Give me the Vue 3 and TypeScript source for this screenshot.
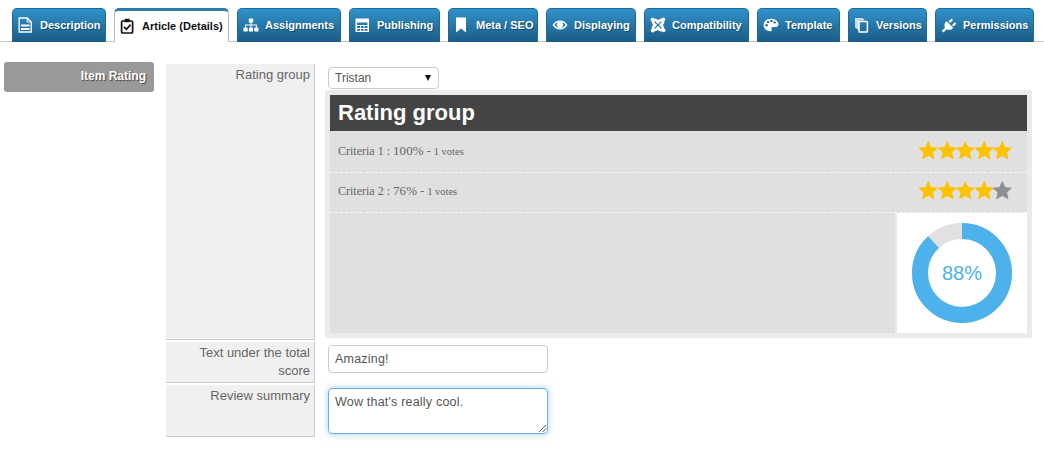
<script setup lang="ts">
interface Tab { label: string; icon: string; width: number; active?: boolean }
const tabs: Tab[] = [
  { label: 'Description', icon: 'doc', width: 94 },
  { label: 'Article (Details)', icon: 'clip', width: 115, active: true },
  { label: 'Assignments', icon: 'tree', width: 104 },
  { label: 'Publishing', icon: 'cal', width: 91 },
  { label: 'Meta / SEO', icon: 'mark', width: 90 },
  { label: 'Displaying', icon: 'eye', width: 90 },
  { label: 'Compatibility', icon: 'joomla', width: 105 },
  { label: 'Template', icon: 'palette', width: 83 },
  { label: 'Versions', icon: 'copies', width: 79 },
  { label: 'Permissions', icon: 'plug', width: 99 },
]
const starPts = '9,0.6 11.6,6.3 17.8,6.9 13.2,11 14.5,17.2 9,14 3.5,17.2 4.8,11 0.2,6.9 6.4,6.3'
const criteria = [
  { name: 'Criteria 1', pct: '100%', on: 5 },
  { name: 'Criteria 2', pct: '76%', on: 4 },
]
const r = 42
const circ = 2 * Math.PI * r
const dash = `${circ * 0.88} ${circ}`
const rotations = [0, 90, 180, 270]
</script>

<template>
  <div class="page">
    <nav class="tabs">
      <a v-for="t in tabs" :key="t.label" class="tab" :class="{ active: t.active }" :style="{ width: t.width + 'px' }">
        <svg class="ico" viewBox="0 0 16 16" width="16" height="16">
          <g v-if="t.icon === 'doc'">
            <path d="M1.2 1H9.2L13.2 5V15H1.2Z" fill="none" stroke="currentColor" stroke-width="1.4" />
            <path d="M9.2 1V5H13.2" fill="none" stroke="currentColor" stroke-width="1" />
            <rect x="3" y="7.5" width="8.5" height="2" fill="currentColor" />
            <rect x="3" y="11" width="8.5" height="2" fill="currentColor" />
          </g>
          <g v-else-if="t.icon === 'clip'">
            <rect x="1.6" y="3" width="11" height="12" rx="1" fill="none" stroke="currentColor" stroke-width="1.7" />
            <rect x="4.6" y="0.8" width="5" height="3.4" fill="currentColor" />
            <path d="M4 8.8L6.4 11.2L10.6 6.6" fill="none" stroke="currentColor" stroke-width="1.7" />
          </g>
          <g v-else-if="t.icon === 'tree'" fill="currentColor">
            <rect x="5.8" y="1.5" width="4.4" height="4" rx=".5" />
            <rect x="0.5" y="10.5" width="4.2" height="4" rx=".5" />
            <rect x="5.9" y="10.5" width="4.2" height="4" rx=".5" />
            <rect x="11.3" y="10.5" width="4.2" height="4" rx=".5" />
            <path d="M7.5 5H8.5V7.6H13.9V10.6H12.9V8.6H8.5V10.6H7.5V8.6H3.1V10.6H2.1V7.6H7.5Z" />
          </g>
          <g v-else-if="t.icon === 'cal'" fill="currentColor">
            <path d="M0.5 1.5H14V15H0.5ZM2 5.5V8H12.5V5.5ZM2 9V11H5V9ZM6 9V11H8.5V9ZM9.5 9V11H12.5V9ZM2 12V13.7H5V12ZM6 12V13.7H8.5V12ZM9.5 12V13.7H12.5V12Z" fill-rule="evenodd" />
          </g>
          <path v-else-if="t.icon === 'mark'" d="M2 0.5H12V15.5L7 11.5L2 15.5Z" fill="currentColor" />
          <g v-else-if="t.icon === 'eye'">
            <path fill-rule="evenodd" fill="currentColor" d="M0.5 8C2.5 4.8 5 3.4 8 3.4S13.5 4.8 15.5 8C13.5 11.2 11 12.6 8 12.6S2.5 11.2 0.5 8ZM2.4 8C3.8 10 5.6 11.2 8 11.2S12.2 10 13.6 8C12.2 6 10.4 4.8 8 4.8S3.8 6 2.4 8Z" />
            <circle cx="8" cy="7.8" r="3.2" fill="currentColor" />
          </g>
          <g v-else-if="t.icon === 'joomla'">
            <g v-for="a in rotations" :key="a" :transform="`rotate(${a} 8 8)`">
              <path d="M8.4 4.9L6.3 3.4C5 2.4 3.2 3.2 3.2 5C3.2 5.8 3.6 6.4 4.2 7L6.2 9" fill="none" stroke="currentColor" stroke-width="2.7" />
              <circle cx="2.5" cy="2.7" r="2" fill="currentColor" />
            </g>
          </g>
          <g v-else-if="t.icon === 'palette'">
            <path fill="currentColor" d="M8 1.8C3.8 1.8 0.6 4.6 0.6 8.1C0.6 11.6 3.6 14.3 7.2 14.3C8.8 14.3 9 13.2 8.5 12.2C8 11.1 8.7 10 10 10H12.6C14.4 10 15.4 8.9 15.4 7.4C15.4 4.2 12.2 1.8 8 1.8Z" />
            <g fill="#20719f">
              <circle cx="3.6" cy="8.2" r="1.2" /><circle cx="5" cy="5" r="1.2" />
              <circle cx="8.4" cy="3.9" r="1.2" /><circle cx="11.6" cy="5.4" r="1.2" />
            </g>
          </g>
          <g v-else-if="t.icon === 'copies'">
            <path d="M1 1H8.5L11 3.5H5V13.5L1 10.5Z" fill="currentColor" opacity=".75" />
            <rect x="5" y="4.4" width="8.4" height="10.6" rx=".8" fill="none" stroke="currentColor" stroke-width="1.5" />
          </g>
          <g v-else fill="currentColor">
            <path d="M5.6 4.2L12.2 10.8C10.5 13.2 8 13.6 5.8 12.2L2.4 15.6L0.8 14L4 10.6C2.8 8.4 3.4 5.8 5.6 4.2Z" />
            <path d="M7.5 4.6L10.4 1.4L12 3L9.1 6ZM11 8L13.8 5.2L15.3 6.7L12.4 9.6Z" />
          </g>
        </svg>
        <span>{{ t.label }}</span>
      </a>
    </nav>

    <div class="body">
      <aside class="side"><div class="side-item">Item Rating</div></aside>

      <div class="form">
        <div class="row row-a">
          <div class="lbl">Rating group</div>
          <div class="val">
            <div class="select"><span>Tristan</span><i class="caret"></i></div>
            <div class="panel">
              <div class="panel-head">Rating group</div>
              <div v-for="c in criteria" :key="c.name" class="crit">
                <span class="crit-t">{{ c.name }} : <b>{{ c.pct }}</b> - <small>1 votes</small></span>
                <span class="stars">
                  <svg v-for="n in 5" :key="n" viewBox="0 0 18 18" width="18.6" height="18.6">
                    <polygon :points="starPts" :fill="n <= c.on ? '#fdc200' : '#8c9093'" :stroke="n <= c.on ? '#fdc200' : '#8c9093'" stroke-width=".8" stroke-linejoin="round" />
                  </svg>
                </span>
              </div>
              <div class="lower">
                <div class="lower-l"></div>
                <div class="lower-r">
                  <div class="gauge">
                    <svg viewBox="0 0 100 100" width="100" height="100">
                      <circle cx="50" cy="50" :r="r" fill="none" stroke="#e1e1e1" stroke-width="16" />
                      <circle cx="50" cy="50" :r="r" fill="none" stroke="#4db2ec" stroke-width="16" :stroke-dasharray="dash" transform="rotate(-90 50 50)" />
                    </svg>
                    <span class="pct">88%</span>
                  </div>
                </div>
              </div>
            </div>
          </div>
        </div>
        <div class="row row-b">
          <div class="lbl">Text under the total score</div>
          <div class="val"><div class="input">Amazing!</div></div>
        </div>
        <div class="row row-c">
          <div class="lbl">Review summary</div>
          <div class="val">
            <div class="input area">Wow that's really cool.
              <svg class="grip" viewBox="0 0 9 9" width="9" height="9"><path d="M1 8L8 1M4.5 8L8 4.5" stroke="#555" stroke-width="1" fill="none" /></svg>
            </div>
          </div>
        </div>
      </div>
    </div>
  </div>
</template>

<style>
html, body { margin: 0; background: #fff; }
</style>

<style scoped>
.page { width: 1044px; height: 451px; overflow: hidden; font-family: "Liberation Sans", Arial, sans-serif; color: #666; }
.tabs { display: flex; gap: 8px; padding: 8px 0 0 12px; box-sizing: content-box; border-bottom: 1px solid #ccc; height: 33px; }
.tab { box-sizing: border-box; height: 34px; display: flex; align-items: center; gap: 6px; padding: 0 0 1px 5px; color: #fff; font-weight: 700; font-size: 11px; white-space: nowrap; border-radius: 5px 5px 0 0; border: 1px solid #1e6a97; border-bottom: 0; background: linear-gradient(#3192cb, #1a5b85); text-shadow: 1px 1px 1px rgba(0,0,0,.35); }
.tab.active { background: #fff; color: #111; text-shadow: none; border: 1px solid #bbb; border-top: 3px solid #2d7ba8; border-bottom: 0; padding-top: 0; }
.ico { flex: none; }
.body { display: flex; gap: 12px; padding: 20px 12px 0 4px; }
.side { width: 150px; flex: none; }
.side-item { height: 30px; box-sizing: border-box; padding: 0 8px 2px 0; display: flex; align-items: center; justify-content: flex-end; background: #999; color: #fff; border-radius: 3px; font-size: 12px; font-weight: 700; text-shadow: 1px 1px 1px #444; }
.form { flex: 1; display: flex; flex-direction: column; padding-top: 2px; }
.row { display: flex; }
.row-a { height: 276px; margin-bottom: 2px; }
.row-b { height: 41px; margin-bottom: 2px; }
.row-c { height: 52px; }
.lbl { width: 149px; flex: none; box-sizing: border-box; background: #f0f0f0; border-right: 1px solid #ccc; border-bottom: 1px solid #ccc; text-align: right; font-size: 13px; line-height: 18px; padding: 2px 4px 0 4px; color: #666; }
.val { flex: 1; padding-left: 10px; }
.select { width: 111px; height: 22px; box-sizing: border-box; margin: 3px 0 1px 3px; border: 1px solid #ccc; border-radius: 4px; display: flex; align-items: center; justify-content: space-between; padding: 0 7px 0 6px; font-size: 12px; color: #555; }
.caret { width: 0; height: 0; border-left: 3.5px solid transparent; border-right: 3.5px solid transparent; border-top: 6px solid #111; }
.panel { height: 248px; box-sizing: border-box; padding: 5px; background: #ebebeb; border-radius: 2px; }
.panel-head { height: 36px; box-sizing: border-box; background: #444; color: #fff; font-size: 22px; font-weight: 700; line-height: 36px; padding-left: 8px; }
.crit { height: 42px; box-sizing: border-box; padding: 0 15px 3px 8px; background: #e0e0e0; border-bottom: 1px dashed #f4f4f4; display: flex; align-items: center; justify-content: space-between; }
.crit + .crit { height: 40px; padding-bottom: 4px; }
.crit:nth-child(2) .crit-t { margin-top: 2px; }
.crit-t { font-family: "Liberation Serif", serif; font-size: 12px; color: #666; }
.crit-t b { font-weight: 400; font-size: 13px; letter-spacing: .1px; }
.crit-t small { font-size: 10.5px; }
.stars { display: flex; }
.lower { display: flex; height: 120px; gap: 2px; box-sizing: border-box; }
.lower-l { flex: 1; background: #e0e0e0; }
.lower-r { width: 130px; flex: none; background: #fff; display: flex; justify-content: center; align-items: center; }
.gauge { position: relative; width: 100px; height: 100px; }
.gauge svg { display: block; }
.pct { position: absolute; inset: 0; display: flex; align-items: center; justify-content: center; font-size: 20px; color: #4db2ec; }
.input { width: 220px; height: 28px; box-sizing: border-box; margin: 3px 0 0 3px; border: 1px solid #ccc; border-radius: 4px; padding: 0 6px; line-height: 26px; font-size: 12.5px; color: #555; letter-spacing: .2px; }
.area { height: 46px; margin-top: 3px; position: relative; border-color: #66afe9; box-shadow: 0 0 6px rgba(102,175,233,.6); line-height: 18px; padding-top: 4px; }
.grip { position: absolute; right: 0; bottom: 0; }
</style>
